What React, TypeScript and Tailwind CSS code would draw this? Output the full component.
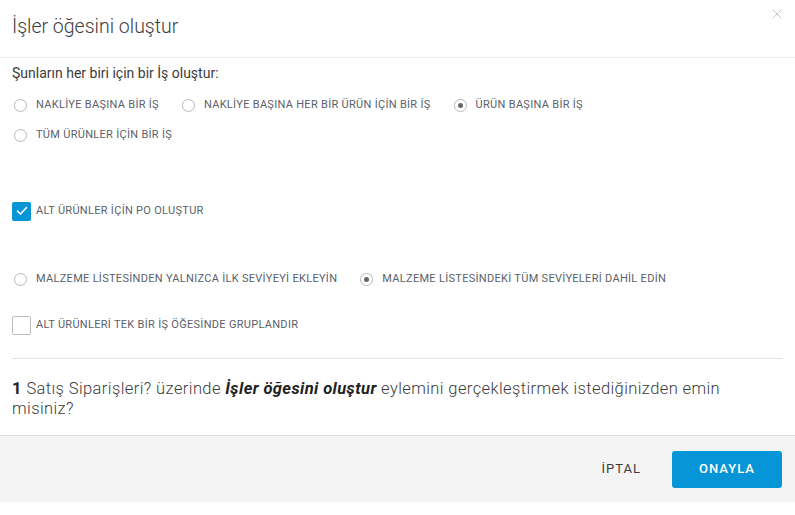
import React from "react";

function Radio({ checked, label }: { checked?: boolean; label: string }) {
  return (
    <label className="flex items-center h-[30px] mr-[21px] shrink-0">
      <span className="w-[13px] h-[13px] ml-[2px] rounded-full border border-[#bdbdbd] bg-white flex items-center justify-center shadow-[0_0_1px_rgba(0,0,0,0.1)]">
        {checked && <span className="w-[5px] h-[5px] rounded-full bg-[#666]" />}
      </span>
      <span className="ml-[9px] text-[11px] tracking-[0.3px] text-[#5a5f6b] font-normal whitespace-nowrap">{label}</span>
    </label>
  );
}

function Checkbox({ checked, label }: { checked?: boolean; label: string }) {
  return (
    <label className="flex items-center h-[30px]">
      {checked ? (
        <span className="w-[19px] h-[19px] rounded-[2px] bg-[#0696d7] flex items-center justify-center">
          <svg width="12" height="10" viewBox="0 0 12 10" fill="none">
            <path d="M1.5 5.2 L4.5 8 L10.5 1.5" stroke="white" strokeWidth="1.6" strokeLinecap="round" strokeLinejoin="round" />
          </svg>
        </span>
      ) : (
        <span className="w-[19px] h-[19px] rounded-[2px] border border-[#bdbdbd] bg-white" />
      )}
      <span className="ml-[5px] text-[11px] tracking-[0.3px] text-[#5a5f6b] font-normal">{label}</span>
    </label>
  );
}

export default function App() {
  return (
    <div
      className="w-[795px] h-[515px] bg-white relative"
      style={{ fontFamily: '"Roboto", "Open Sans", sans-serif' }}
    >
      <div className="h-[58px] flex items-center px-3 border-b border-[#ececec] relative">
        <h1 className="text-[19.5px] font-light text-[#3c3c3c] -mt-[3px]">İşler öğesini oluştur</h1>
        <button className="absolute right-[13px] top-[9px] w-[10px] h-[10px]">
          <svg width="10" height="10" viewBox="0 0 10 10">
            <path d="M0.5 0.5 L9.5 9.5 M9.5 0.5 L0.5 9.5" stroke="#c4c4c4" strokeWidth="1" />
          </svg>
        </button>
      </div>

      <div className="px-3">
        <div className="pt-[5px] text-[14px] leading-[20px] text-[#3c3c3c]">Şunların her biri için bir İş oluştur:</div>
        <div className="mt-[7px] flex">
          <Radio label="NAKLİYE BAŞINA BİR İŞ" />
          <Radio label="NAKLİYE BAŞINA HER BİR ÜRÜN İÇİN BİR İŞ" />
          <Radio checked label="ÜRÜN BAŞINA BİR İŞ" />
        </div>
        <div className="flex">
          <Radio label="TÜM ÜRÜNLER İÇİN BİR İŞ" />
        </div>

        <div className="mt-[46px]">
          <Checkbox checked label="ALT ÜRÜNLER İÇİN PO OLUŞTUR" />
        </div>

        <div className="mt-[38px] flex">
          <Radio label="MALZEME LİSTESİNDEN YALNIZCA İLK SEVİYEYİ EKLEYİN" />
          <Radio checked label="MALZEME LİSTESİNDEKİ TÜM SEVİYELERİ DAHİL EDİN" />
        </div>

        <div className="mt-[16px]">
          <Checkbox label="ALT ÜRÜNLERİ TEK BİR İŞ ÖĞESİNDE GRUPLANDIR" />
        </div>

        <div className="mt-[18px] border-t border-[#e2e2e2]" />

        <div className="pt-[20px] pb-[16px] pr-[20px] text-[#3c3c3c]">
          <p className="text-[16.5px] leading-[20px] tracking-[0.4px] font-light">
            <b className="font-bold text-[#222]">1 </b>Satış Siparişleri? üzerinde{" "}
            <b className="font-bold italic text-[#222]">İşler öğesini oluştur </b>eylemini gerçekleştirmek istediğinizden emin misiniz?
          </p>
        </div>
      </div>

      <div className="h-[67px] bg-[#f4f4f4] border-t border-[#e0e0e0] flex items-center justify-end pr-[13px]">
        <button className="text-[13px] tracking-[1px] text-[#3c3c3c] font-normal mr-[31px]">İPTAL</button>
        <button className="w-[110px] h-[37px] rounded-[3px] bg-[#0696d7] text-white text-[13px] tracking-[1px] font-medium">ONAYLA</button>
      </div>
    </div>
  );
}
